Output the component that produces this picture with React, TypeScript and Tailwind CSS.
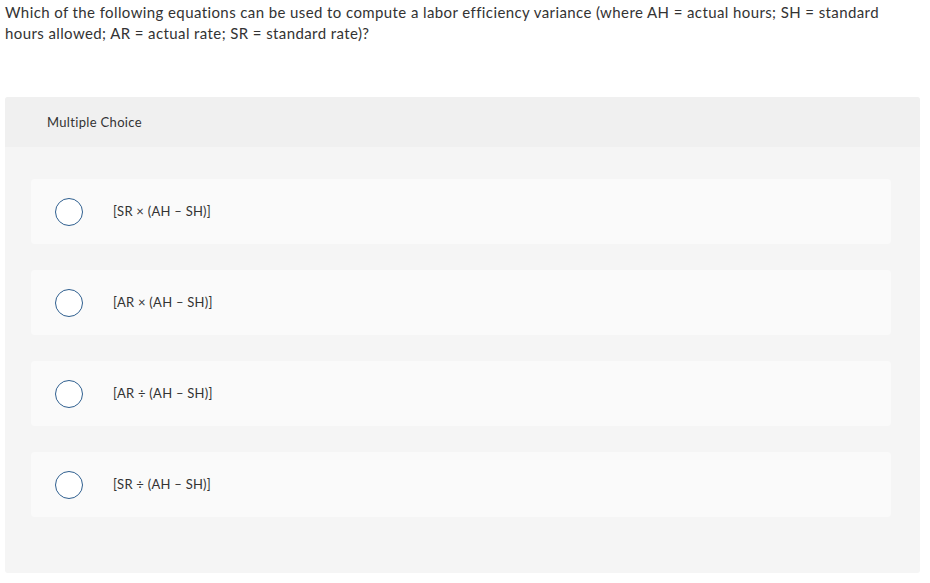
import React from 'react';

const options = ['[SR × (AH – SH)]', '[AR × (AH – SH)]', '[AR ÷ (AH – SH)]', '[SR ÷ (AH – SH)]'];

export default function App() {
  return (
    <div className="w-[930px] h-[583px] bg-white text-[#333] font-['Lato',sans-serif]">
      <p className="pl-[5px] pr-[25px] pt-[2px] text-[15px] leading-[21px] tracking-[0.4px]">
        Which of the following equations can be used to compute a labor efficiency variance (where AH = actual hours; SH = standard hours allowed; AR = actual rate; SR = standard rate)?
      </p>
      <div className="mt-[53px] ml-[5px] w-[915px] h-[476px] bg-[#f5f5f5] rounded-[3px] flex flex-col">
        <div className="h-[50px] bg-[#f0f0f0] flex items-center pl-[42px] pt-[2px] text-[13px] tracking-[0.33px] rounded-t-[3px]">
          Multiple Choice
        </div>
        <div className="flex flex-col gap-[26px] pt-[32px] pl-[26px] pr-[29px]">
          {options.map((o) => (
            <div key={o} className="h-[65px] bg-[#fafafa] rounded-[4px] flex items-center pl-[24px]">
              <span className="w-[28px] h-[28px] rounded-full border-[1.5px] border-[#2f5f8f] bg-white" />
              <span className="ml-[30px] text-[13px] tracking-[0.25px]">{o}</span>
            </div>
          ))}
        </div>
      </div>
    </div>
  );
}
